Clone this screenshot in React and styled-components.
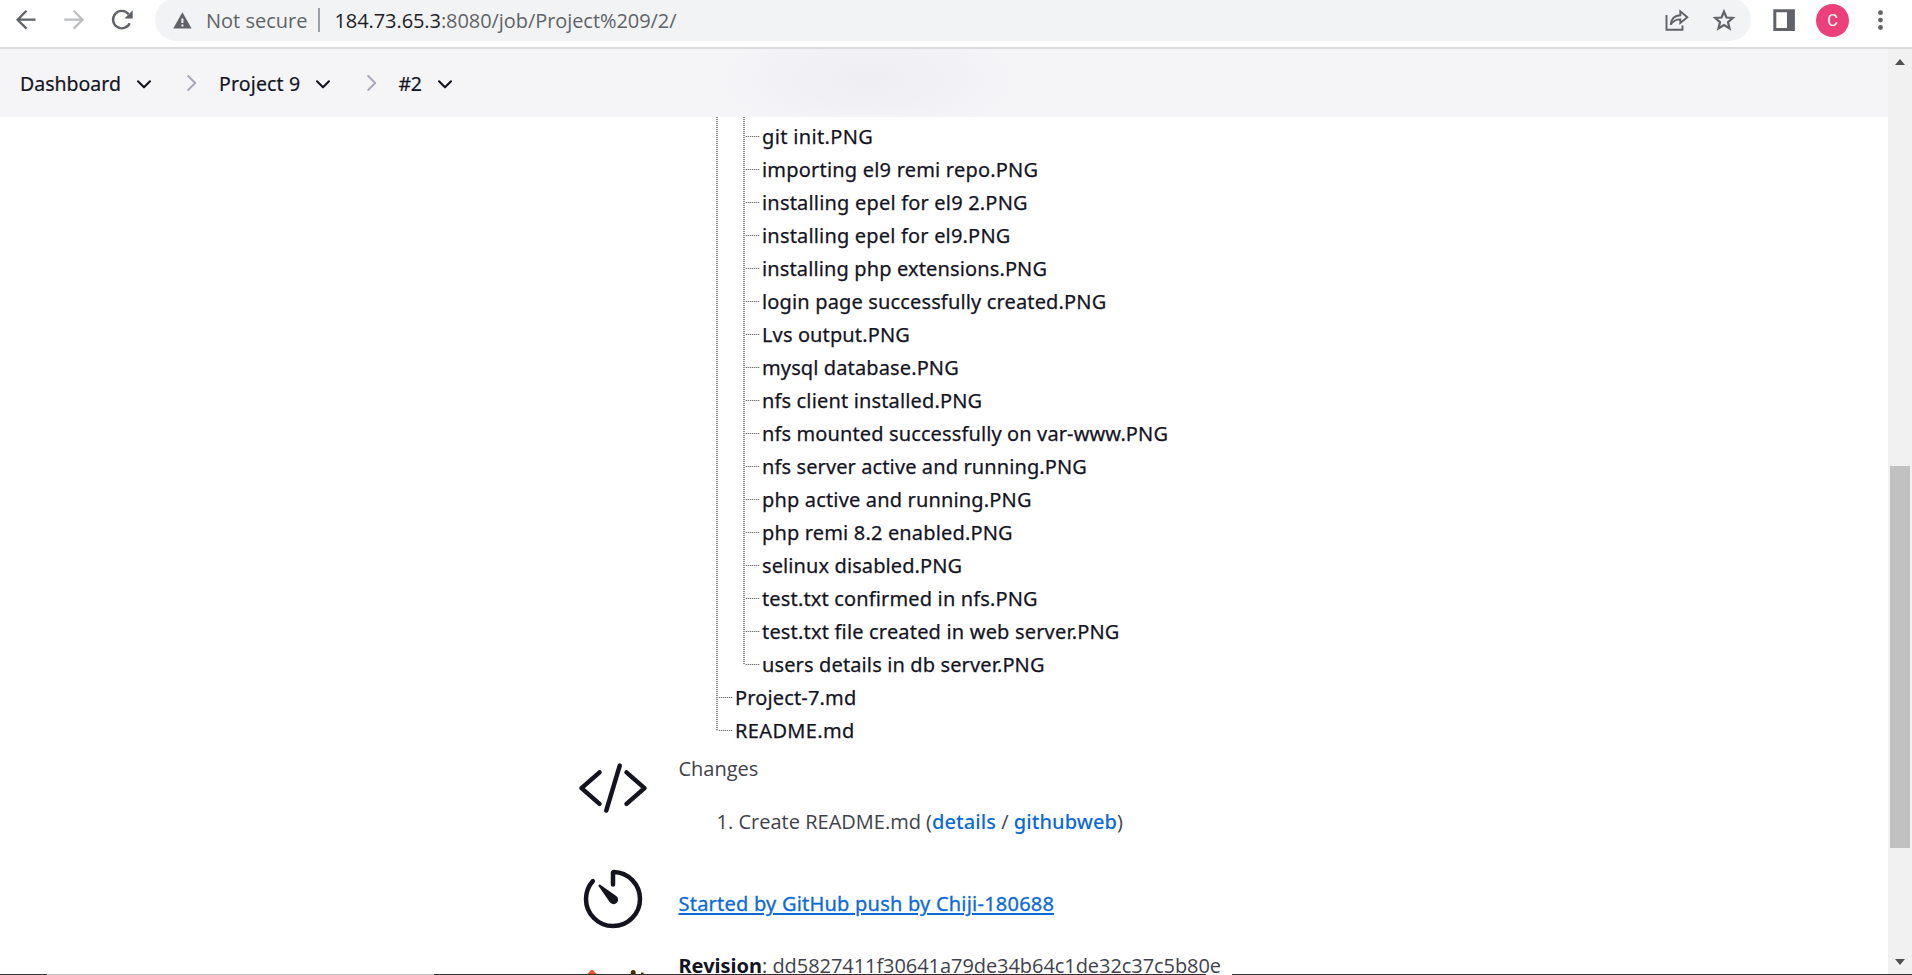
import React from 'react';
import styled, { createGlobalStyle } from 'styled-components';

const GlobalStyle = createGlobalStyle`
  * { box-sizing: border-box; }
  body { margin: 0; background: #fff; overflow: hidden; }
`;

const uiFont = '"Open Sans", "Noto Sans", sans-serif';
const linkFont = '"Noto Sans", "Open Sans", sans-serif';

const Window = styled.div`
  display: flex;
  flex-direction: column;
  width: 1912px;
  height: 975px;
  overflow: hidden;
  font: 400 20px/33px ${uiFont};
  color: #41414c;
`;

const Toolbar = styled.div`
  display: flex;
  flex: none;
  align-items: flex-start;
  height: 49px;
  padding-left: 10px;
  border-bottom: 2px solid #dadbdd;
  background: #fff;
`;

const Icon = styled.svg`
  display: block;
  flex: none;
  width: ${(p) => p.$w}px;
  height: ${(p) => p.$h}px;
  margin-left: ${(p) => p.$ml || 0}px;
  fill: none;
  stroke: ${(p) => p.$color || 'none'};
  stroke-width: ${(p) => p.$stroke || 2};
`;

const AddressBar = styled.div`
  display: flex;
  align-items: flex-start;
  width: 1596px;
  height: 43px;
  margin: -2px 0 0 17px;
  padding: 2px 15px 0 18px;
  border-radius: 22px;
  background: #f1f3f4;
`;

const AddressText = styled.span`
  margin-left: ${(p) => p.$ml}px;
  line-height: 41px;
  color: ${(p) => p.$color};
  letter-spacing: ${(p) => p.$ls || 0}px;
  white-space: pre;
`;

const Divider = styled.span`
  width: 2px;
  height: 24px;
  margin: 8px 0 0 11px;
  background: #9aa0a6;
`;

const Spacer = styled.span`
  flex: 1;
`;

const Avatar = styled.span`
  width: 33px;
  height: 33px;
  margin: 4px 0 0 20px;
  border-radius: 50%;
  background: #ec407a;
  color: #fff;
  font: 400 16.5px/33px Roboto, sans-serif;
  text-align: center;
`;

const Body = styled.div`
  display: flex;
  flex: 1;
  min-height: 0;
`;

const Page = styled.main`
  flex: 1;
  min-width: 0;
  overflow: hidden;
`;

const Breadcrumbs = styled.nav`
  display: flex;
  align-items: flex-start;
  height: 68px;
  padding-left: 20px;
  background:
    radial-gradient(ellipse 150px 56px at 868px 30px, #efeff3 0%, #f1f1f5 45%, rgba(245, 245, 248, 0) 100%),
    #f5f5f8;
`;

const Crumb = styled.a`
  flex: none;
  width: ${(p) => p.$w}px;
  margin-left: ${(p) => p.$ml || 0}px;
  padding-top: 18px;
  font: 400 19.5px/33px ${linkFont};
  letter-spacing: ${(p) => p.$ls}px;
  color: #14141f;
  -webkit-text-stroke: 0.2px;
  white-space: pre;
`;

const Tree = styled.div`
  display: flex;
  margin-left: ${(p) => p.$ml}px;
`;

const Branch = styled.span`
  flex: none;
  width: 2px;
  margin-bottom: 16px;
  background: repeating-linear-gradient(to bottom, #8f8f8f 0 1px, #f2f2f2 1px 2px);
`;

const Leaves = styled.div`
  padding-top: ${(p) => p.$pt || 0}px;
`;

const Leaf = styled.div`
  display: flex;
  align-items: center;
  height: 33px;
`;

const Stub = styled.span`
  flex: none;
  width: 15px;
  height: 1px;
  margin-right: 2px;
  background: repeating-linear-gradient(to right, #d8d8d8 0 1px, #6f6f6f 1px 2px);
`;

const FileLink = styled.a`
  font-family: ${linkFont};
  color: #14141f;
  letter-spacing: ${(p) => p.$ls}px;
  -webkit-text-stroke: 0.25px;
  white-space: pre;
`;

const Section = styled.section`
  display: flex;
  align-items: flex-start;
  gap: 29.5px;
  height: ${(p) => p.$h}px;
  padding-left: 577px;
`;

const SectionText = styled.div`
  padding-top: ${(p) => p.$pt}px;
  letter-spacing: ${(p) => p.$ls || 0}px;
  white-space: pre;
`;

const ChangeItem = styled.div`
  display: flex;
  margin-top: 20px;
  padding-left: 38px;
`;

const ItemNumber = styled.span`
  width: 22px;
`;

const BlueLink = styled.a`
  font-family: ${linkFont};
  font-weight: ${(p) => p.$weight || 500};
  letter-spacing: ${(p) => p.$ls || 0}px;
  color: #0b6ad8;
  -webkit-text-stroke: ${(p) => (p.$weight ? 0.3 : 0)}px;
  text-decoration: ${(p) => (p.$underline ? 'underline' : 'none')};
  text-decoration-thickness: 2px;
  text-underline-offset: 2px;
`;

const Label = styled.b`
  font-family: ${linkFont};
  font-weight: 700;
  letter-spacing: ${(p) => p.$ls || 0}px;
  color: #14141f;
`;

const Scrollbar = styled.div`
  display: flex;
  flex: none;
  flex-direction: column;
  align-items: center;
  width: 24px;
  background: #f1f1f1;
`;

const Arrow = styled.span`
  width: 0;
  height: 0;
  margin-top: ${(p) => p.$mt}px;
  border: 5.5px solid transparent;
  border-${(p) => (p.$down ? 'top' : 'bottom')}: 6px solid #505050;
  border-${(p) => (p.$down ? 'bottom' : 'top')}: 0;
`;

const Thumb = styled.span`
  width: 20px;
  height: 382px;
  margin-top: 401px;
  background: #c1c1c1;
`;

const EdgeLine = styled.div`
  flex: none;
  height: 1px;
  background: linear-gradient(
    to right,
    #333 0 47px, #bdbdbd 47px 434px, #333032 434px 1206px, #fff 1206px 1232px, #333 1232px
  );
`;

const files = [
  ['git init.PNG', 0.35],
  ['importing el9 remi repo.PNG', 0.2],
  ['installing epel for el9 2.PNG', 0.19],
  ['installing epel for el9.PNG', 0.18],
  ['installing php extensions.PNG', 0.13],
  ['login page successfully created.PNG', 0.15],
  ['Lvs output.PNG', 0.12],
  ['mysql database.PNG', 0.12],
  ['nfs client installed.PNG', 0.15],
  ['nfs mounted successfully on var-www.PNG', 0.12],
  ['nfs server active and running.PNG', 0.11],
  ['php active and running.PNG', 0.16],
  ['php remi 8.2 enabled.PNG', 0.16],
  ['selinux disabled.PNG', 0.1],
  ['test.txt confirmed in nfs.PNG', 0.15],
  ['test.txt file created in web server.PNG', 0.18],
  ['users details in db server.PNG', 0.13],
];

const rootFiles = [
  ['Project-7.md', 0.15],
  ['README.md', 0.35],
];

const FileRow = ({ name, spacing }) => (
  <Leaf>
    <Stub />
    <FileLink $ls={spacing}>{name}</FileLink>
  </Leaf>
);

const DownChevron = ({ ml }) => (
  <Icon $w={16} $h={68} $ml={ml} $color="#14141f" $stroke={2.1} viewBox="0 0 16 68" strokeLinecap="round" strokeLinejoin="round">
    <path d="M2 32.3 8 38.3 14 32.3" />
  </Icon>
);

const Separator = ({ ml }) => (
  <Icon $w={12} $h={68} $ml={ml} $color="#a9a8b8" $stroke={2} viewBox="0 0 12 68" strokeLinecap="round" strokeLinejoin="round">
    <path d="M2.2 27 9.2 34 2.2 41" />
  </Icon>
);

export default function App() {
  return (
    <Window>
      <GlobalStyle />
      <Toolbar>
        <Icon $w={32} $h={40} $color="#5f6368" viewBox="10 0 32 40" $stroke={2.3}>
          <path d="M35.5 19.7H18M26.5 10.8 17.6 19.7 26.5 28.6" />
        </Icon>
        <Icon $w={32} $h={40} $ml={16} $color="#bcbec0" viewBox="58 0 32 40" $stroke={2.3}>
          <path d="M64.3 19.7H82M73.7 10.8 82.6 19.7 73.7 28.6" />
        </Icon>
        <Icon $w={32} $h={40} $ml={16} $color="#5f6368" viewBox="106 0 32 40" $stroke={2.4}>
          <path d="M129.7 23.2A8.7 8.7 0 1 1 128.6 14.2" />
          <path d="M132.7 10.3V18.6H124.4Z" fill="#5f6368" stroke="none" />
        </Icon>
        <AddressBar>
          <Icon $w={20} $h={40} viewBox="173 0 20 40">
            <path d="M182.4 12.3 191.6 28.6H173.2Z" fill="#5f6368" />
            <path d="M181.4 18.4h2v4.6h-2zM181.4 24.6h2v2h-2z" fill="#f1f3f4" />
          </Icon>
          <AddressText $ml={13} $color="#5f6368">Not secure</AddressText>
          <Divider />
          <AddressText $ml={14} $color="#202124" $ls={-0.07}>184.73.65.3</AddressText>
          <AddressText $ml={0} $color="#5f6368" $ls={-0.07}>:8080/job/Project%209/2/</AddressText>
          <Spacer />
          <Icon $w={26} $h={40} $color="#5f6368" viewBox="1664 0 26 40" $stroke={1.9}>
            <path d="M1666.5 15V29.8H1682.5V25.6" />
            <path d="M1670.6 24.6C1671.3 18.6 1675 15.6 1680.3 15.3V11.3L1687.3 17.2 1680.3 23V19.4C1676 19.3 1673 21.2 1670.6 24.6Z" />
          </Icon>
          <Icon $w={24} $h={40} $ml={22} $color="#5f6368" viewBox="1712 0 24 40" $stroke={2.2}>
            <path d="M1724 11.6 1726.5 17.5 1732.8 18 1728 22.2 1729.5 28.4 1724 25.1 1718.5 28.4 1720 22.2 1715.2 18 1721.5 17.5Z" />
          </Icon>
        </AddressBar>
        <Icon $w={24} $h={40} $ml={21} viewBox="1772 0 24 40">
          <path d="M1773.3 9.2H1794.9V31H1773.3ZM1776.3 12.2V28H1787V12.2Z" fill="#5f6368" fillRule="evenodd" />
        </Icon>
        <Avatar>C</Avatar>
        <Icon $w={12} $h={40} $ml={24.5} viewBox="1873.5 0 12 40">
          <g fill="#5f6368">
            <circle cx="1880" cy="12.7" r="2.4" />
            <circle cx="1880" cy="20.1" r="2.4" />
            <circle cx="1880" cy="27.5" r="2.4" />
          </g>
        </Icon>
      </Toolbar>

      <Body>
        <Page>
          <Breadcrumbs>
            <Crumb $w={101} $ls={0}>Dashboard</Crumb>
            <DownChevron ml={15} />
            <Separator ml={34} />
            <Crumb $w={82} $ml={21} $ls={0.15}>Project 9</Crumb>
            <DownChevron ml={13.5} />
            <Separator ml={35.5} />
            <Crumb $w={24} $ml={20.5} $ls={-0.4}>#2</Crumb>
            <DownChevron ml={14.5} />
          </Breadcrumbs>

          <Tree $ml={716}>
            <Branch />
            <div>
              <Tree $ml={25}>
                <Branch />
                <Leaves $pt={3}>
                  {files.map(([name, spacing]) => (
                    <FileRow key={name} name={name} spacing={spacing} />
                  ))}
                </Leaves>
              </Tree>
              <Leaves>
                {rootFiles.map(([name, spacing]) => (
                  <FileRow key={name} name={name} spacing={spacing} />
                ))}
              </Leaves>
            </div>
          </Tree>

          <Section $h={111}>
            <Icon $w={72} $h={82} viewBox="0 -36 512 583" $color="#14141f" $stroke={32} strokeLinecap="round" strokeLinejoin="round">
              <path d="M160 368 32 256 160 144M352 368 480 256 352 144M304 96 208 416" />
            </Icon>
            <SectionText $pt={5}>
              <div>Changes</div>
              <ChangeItem>
                <ItemNumber>1.</ItemNumber>
                <span>
                  Create README.md (<BlueLink $ls={0.08}>details</BlueLink> / <BlueLink $ls={0.08}>githubweb</BlueLink>)
                </span>
              </ChangeItem>
            </SectionText>
          </Section>

          <Section $h={91}>
            <Icon $w={72} $h={82} viewBox="0 -36 512 583" $color="#14141f" $stroke={32} strokeLinecap="round" strokeLinejoin="round">
              <path d="M112.91 128A191.85 191.85 0 0 0 64 254c-1.18 106.35 85.65 193.8 192 194 106.2.2 192-85.83 192-192 0-104.54-83.55-189.61-187.5-192a4.36 4.36 0 0 0-4.5 4.37V152" />
              <path d="M233.38 278.63l-79-113a8.13 8.13 0 0 1 11.32-11.32l113 79a32.5 32.5 0 0 1-37.25 53.26 33.21 33.21 0 0 1-8.07-7.94z" fill="#14141f" stroke="none" />
            </Icon>
            <SectionText $pt={29}>
              <BlueLink $weight={400} $ls={0.22} $underline>Started by GitHub push by Chiji-180688</BlueLink>
            </SectionText>
          </Section>

          <Section $h={40}>
            <Icon $w={72} $h={40} viewBox="577 949 72 40">
              <path d="M592 970.4 603 981 592 992 581 981Z" fill="#f05033" stroke="#f05033" strokeWidth="1.5" strokeLinejoin="round" />
              <circle cx="633.2" cy="972.6" r="2.5" fill="#413000" />
              <path d="M641 972.6h2.6v8h-2.6z" fill="#413000" />
            </Icon>
            <SectionText $pt={0} $ls={-0.06}>
              <Label>Revision</Label>: dd5827411f30641a79de34b64c1de32c37c5b80e
            </SectionText>
          </Section>
        </Page>

        <Scrollbar>
          <Arrow $mt={10} />
          <Thumb />
          <Arrow $down $mt={111} />
        </Scrollbar>
      </Body>
      <EdgeLine />
    </Window>
  );
}
